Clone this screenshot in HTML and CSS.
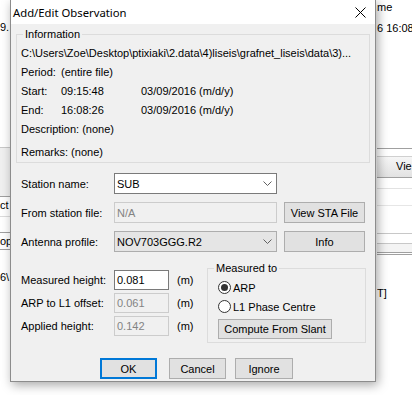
FILE: index.html
```html
<!DOCTYPE html>
<html>
<head>
<meta charset="utf-8">
<title>Add/Edit Observation</title>
<link rel="stylesheet" href="styles.css">
</head>
<body>
<div class="backdrop">
  <div class="bg-left">
    <div class="bg-text t-nine">9.</div>
    <div class="lb1"></div>
    <div class="bg-text t-ct">ct</div>
    <div class="lb2">op</div>
    <div class="bg-text t-six">6\</div>
  </div>
  <div class="bg-right">
    <div class="bg-text r-me">me</div>
    <div class="bg-text r-time">6 16:08</div>
    <div class="rl1"></div>
    <div class="rband">Vie</div>
    <div class="rrow r1"></div>
    <div class="rrow r2"></div>
    <div class="rrow r3"></div>
    <div class="rrow r4"></div>
    <div class="rrow r5"></div>
    <div class="rrow r6"></div>
    <div class="bg-text r-t">T]</div>
  </div>
</div>

<div class="dialog">
  <div class="titlebar">
    <span class="title">Add/Edit Observation</span>
    <svg class="close" width="11" height="11" viewBox="0 0 11 11"><path d="M0.5 0.5 L10.5 10.5 M10.5 0.5 L0.5 10.5" stroke="#000" stroke-width="1" fill="none"/></svg>
  </div>
  <div class="dlg-body">
    <fieldset class="group info">
      <legend>Information</legend>
      <div class="row">C:\Users\Zoe\Desktop\ptixiaki\2.data\4)liseis\grafnet_liseis\data\3)...</div>
      <div class="row kv"><span>Period:</span><span class="span2">(entire file)</span></div>
      <div class="row kv"><span>Start:</span><span>09:15:48</span><span>03/09/2016 (m/d/y)</span></div>
      <div class="row kv"><span>End:</span><span>16:08:26</span><span>03/09/2016 (m/d/y)</span></div>
      <div class="row">Description: (none)</div>
      <div class="row remarks">Remarks: (none)</div>
    </fieldset>

    <div class="station">
      <div class="lbl">Station name:</div>
      <div class="ctl combo">
        <span>SUB</span>
        <svg width="9" height="5" viewBox="0 0 9 5"><path d="M0.5 0.5 L4.5 4.5 L8.5 0.5" stroke="#606060" fill="none"/></svg>
      </div>
      <div></div>

      <div class="lbl">From station file:</div>
      <div class="ctl disabled">N/A</div>
      <div class="btn">View STA File</div>

      <div class="lbl">Antenna profile:</div>
      <div class="ctl combo readonly">
        <span>NOV703GGG.R2</span>
        <svg width="9" height="5" viewBox="0 0 9 5"><path d="M0.5 0.5 L4.5 4.5 L8.5 0.5" stroke="#606060" fill="none"/></svg>
      </div>
      <div class="btn">Info</div>
    </div>

    <div class="measure">
      <div class="heights">
        <div class="hrow"><span class="hl">Measured height:</span><span class="field">0.081</span><span class="unit">(m)</span></div>
        <div class="hrow"><span class="hl">ARP to L1 offset:</span><span class="field disabled">0.061</span><span class="unit">(m)</span></div>
        <div class="hrow"><span class="hl">Applied height:</span><span class="field disabled">0.142</span><span class="unit">(m)</span></div>
      </div>
      <div class="groupbox measured-to">
        <span class="gb-legend">Measured to</span>
        <div class="radio-row"><span class="radio checked"></span><span class="rtext">ARP</span></div>
        <div class="radio-row"><span class="radio"></span><span class="rtext">L1 Phase Centre</span></div>
        <div class="btn slant">Compute From Slant</div>
      </div>
    </div>

    <div class="actions">
      <div class="btn default">OK</div>
      <div class="btn cancel">Cancel</div>
      <div class="btn ignore">Ignore</div>
    </div>
  </div>
</div>
</body>
</html>
```

FILE: styles.css
```css
* { box-sizing: border-box; }

body {
  margin: 0;
  width: 412px;
  height: 395px;
  overflow: hidden;
  background: #fff;
  position: relative;
  font-family: "Liberation Sans", Arial, sans-serif;
  font-size: 11px;
  color: #000;
}

/* ---------- background window ---------- */
.backdrop {
  display: flex;
  justify-content: space-between;
  height: 395px;
}
.bg-left { width: 10px; overflow: hidden; }
.bg-right { width: 35px; overflow: hidden; }
.bg-text { line-height: 13px; white-space: nowrap; }

.t-nine { margin-top: 21px; }
.lb1 {
  margin-top: 113px;
  height: 50px;
  border-top: 1px solid #c8c8c8;
  border-bottom: 1px solid #a0a0a0;
  background: #f0f0f0;
}
.t-ct { margin-top: 2px; border-bottom: 1px solid #dcdcdc; padding-bottom: 4px; }
.lb2 {
  margin-top: 15px;
  height: 18px;
  line-height: 16px;
  border-top: 1px solid #a0a0a0;
  border-bottom: 1px solid #a0a0a0;
  white-space: nowrap;
}
.t-six { margin-top: 21px; }

.r-me { margin-top: 1px; }
.r-time { margin-top: 8px; }
.rl1 { margin-top: 113px; height: 8px; border-top: 1px solid #a0a0a0; }
.rband {
  height: 21px;
  border-top: 1px solid #d0d0d0;
  background: linear-gradient(#f6f6f6, #e2e2e2);
  padding-left: 19px;
  line-height: 19px;
  white-space: nowrap;
}
.rrow { border-top: 1px solid #d6d6d6; }
.r1 { height: 11px; border-top-color: #a0a0a0; }
.r2 { height: 17px; border-top-color: #e2e2e2; }
.r3 { height: 28px; border-top-color: #e6e6e6; }
.r4 { height: 10px; border-top-color: #c8c8c8; }
.r5 { height: 9px; border-top-color: #c8c8c8; background: #f4f4f4; }
.r6 { height: 3px; border-top-color: #a0a0a0; border-bottom: 1px solid #a0a0a0; }
.r-t { margin-top: 32px; }

/* ---------- dialog ---------- */
.dialog {
  position: absolute;
  left: 10px;
  top: 0;
  width: 366px;
  height: 382px;
  border: 1px solid #8c8c8c;
  border-top: none;
  background: #f0f0f0;
  box-shadow: 2px 3px 10px rgba(0, 0, 0, 0.35);
  display: flex;
  flex-direction: column;
}

.titlebar {
  height: 24px;
  flex: none;
  background: #fff;
  display: flex;
  align-items: center;
  justify-content: space-between;
  padding: 0 9px 0 2px;
}
.title {
  font-family: "Noto Sans", "Open Sans", sans-serif;
  font-size: 11.3px;
  color: #000;
}
.close { display: block; }

.dlg-body { padding: 4px 5px 0; }

fieldset.group {
  margin: 0;
  min-width: 0;
  border: 1px solid #dcdcdc;
}
fieldset.group legend {
  font-size: 11px;
  line-height: 12px;
  padding: 0 2px;
}

.info { padding: 4px 4px 0 4px; }
.info legend { margin-left: 2px; }

.row {
  height: 19px;
  line-height: 19px;
  white-space: nowrap;
}
.kv {
  display: grid;
  grid-template-columns: 40px 80px auto;
}
.kv .span2 { grid-column: 2 / 4; }
.remarks { margin-top: 4px; }

/* station section */
.station {
  display: grid;
  grid-template-columns: 93px 163px 88px;
  grid-auto-rows: 21px;
  row-gap: 8px;
  margin-top: 10px;
  padding-left: 5px;
  align-items: center;
}
.station .btn { margin-left: 7px; }
.lbl { white-space: nowrap; }

.ctl {
  height: 21px;
  border: 1px solid #7a7a7a;
  background: #fff;
  padding: 0 4px 0 2px;
  display: flex;
  align-items: center;
  white-space: nowrap;
}
.combo { justify-content: space-between; }
.combo svg { display: block; }
.ctl.disabled {
  border-color: #cccccc;
  background: #f0f0f0;
  color: #838383;
}
.ctl.readonly {
  border-color: #adadad;
  background: #e5e5e5;
}

.btn {
  height: 21px;
  border: 1px solid #adadad;
  background: #e1e1e1;
  display: flex;
  align-items: center;
  justify-content: center;
  white-space: nowrap;
}
.btn.default { border: 2px solid #0078d7; }

/* measurement section */
.measure {
  display: flex;
  justify-content: space-between;
  margin-top: 11px;
}
.heights {
  padding: 7px 0 0 5px;
  display: flex;
  flex-direction: column;
  gap: 3px;
}
.hrow {
  display: flex;
  align-items: center;
  height: 20px;
}
.hl { width: 93px; white-space: nowrap; }
.field {
  width: 55px;
  height: 20px;
  border: 1px solid #7a7a7a;
  background: #fff;
  padding-left: 2px;
  display: flex;
  align-items: center;
}
.field.disabled {
  border-color: #cccccc;
  background: #f0f0f0;
  color: #838383;
}
.unit { margin-left: 8px; }

.groupbox {
  position: relative;
  border: 1px solid #dcdcdc;
}
.gb-legend {
  position: absolute;
  top: -7px;
  left: 6px;
  padding: 0 2px;
  line-height: 12px;
  background: #f0f0f0;
  white-space: nowrap;
}
.measured-to {
  flex: none;
  width: 159px;
  height: 75px;
  margin: 5px 4px 0 0;
  padding: 9px 0 0 10px;
}

.radio-row {
  height: 19px;
  display: flex;
  align-items: center;
}
.radio {
  width: 13px;
  height: 13px;
  border: 1px solid #333;
  border-radius: 50%;
  background: #fff;
  display: flex;
  align-items: center;
  justify-content: center;
}
.radio.checked::after {
  content: "";
  width: 7px;
  height: 7px;
  border-radius: 50%;
  background: #333;
}
.rtext { margin-left: 2px; white-space: nowrap; }
.btn.slant { width: 114px; height: 20px; margin-top: 3px; }

/* bottom buttons */
.actions {
  display: flex;
  margin-top: 15px;
  padding-left: 84px;
}
.actions .btn { width: 57px; }
.actions .cancel { margin-left: 12px; }
.actions .ignore { margin-left: 9px; width: 58px; }
```
